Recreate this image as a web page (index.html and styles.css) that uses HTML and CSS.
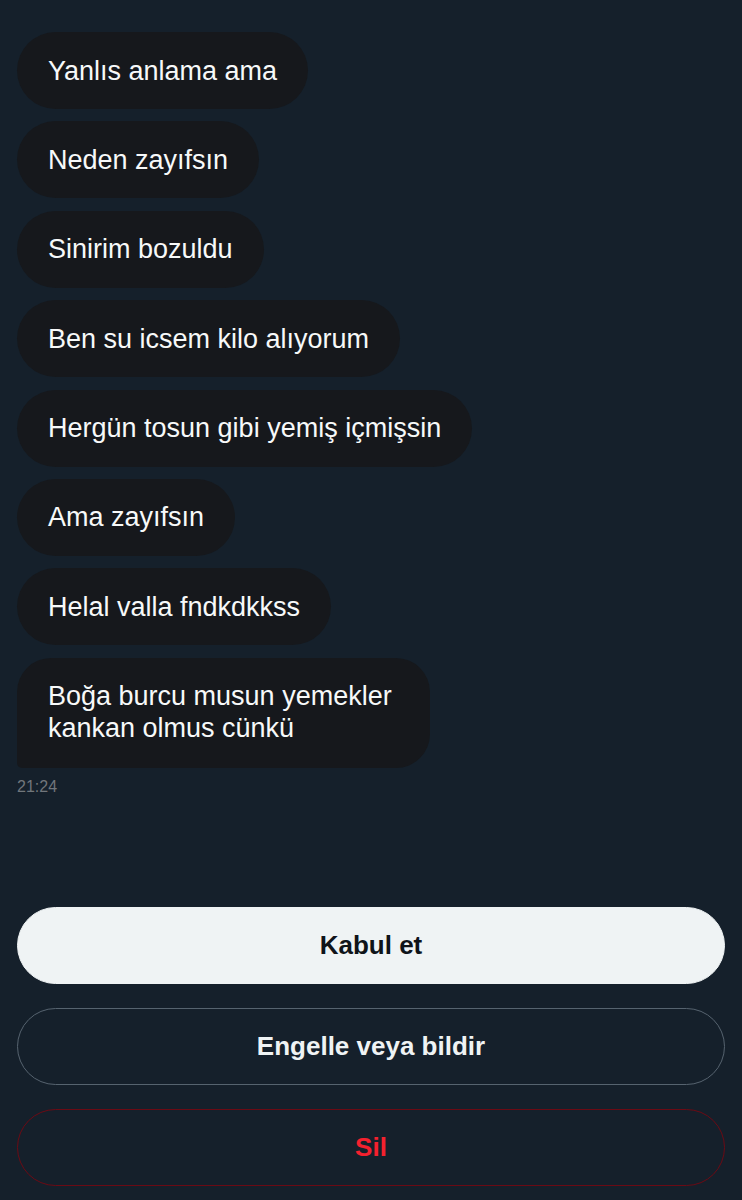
FILE: index.html
```html
<!DOCTYPE html>
<html lang="tr">
<head>
<meta charset="utf-8">
<link rel="stylesheet" href="styles.css">
<title>Mesaj isteği</title>
</head>
<body>
<main class="screen">
  <section class="thread">
    <div class="bubble">Yanlıs anlama ama</div>
    <div class="bubble">Neden zayıfsın</div>
    <div class="bubble">Sinirim bozuldu</div>
    <div class="bubble">Ben su icsem kilo alıyorum</div>
    <div class="bubble">Hergün tosun gibi yemiş içmişsin</div>
    <div class="bubble">Ama zayıfsın</div>
    <div class="bubble">Helal valla fndkdkkss</div>
    <div class="bubble last">Boğa burcu musun yemekler<br>kankan olmus cünkü</div>
    <div class="time">21:24</div>
  </section>
  <section class="actions">
    <button class="btn accept">Kabul et</button>
    <button class="btn block">Engelle veya bildir</button>
    <button class="btn delete">Sil</button>
  </section>
</main>
</body>
</html>
```

FILE: styles.css
```css
html, body {
  margin: 0;
  padding: 0;
  background: #15202b;
}
body {
  font-family: "Liberation Sans", Arial, sans-serif;
  color: #e7e9ea;
}
.screen {
  display: flex;
  flex-direction: column;
  padding: 32px 17px 0 17px;
}
.thread {
  display: flex;
  flex-direction: column;
  align-items: flex-start;
  gap: 12.4px;
}
.bubble {
  background: #16181c;
  color: #f7f9f9;
  font-size: 27px;
  line-height: 32px;
  padding: 22.5px 31px 22.5px 31px;
  border-radius: 40px;
}
.bubble.last {
  border-radius: 34px 34px 34px 5px;
  padding-right: 38px;
  padding-bottom: 24px;
}
.time {
  margin-top: -4px;
  font-size: 16px;
  line-height: 20px;
  color: #71767b;
}
.actions {
  display: flex;
  flex-direction: column;
  gap: 23.5px;
  margin-top: 110px;
}
.btn {
  box-sizing: border-box;
  width: 100%;
  height: 77.5px;
  border-radius: 40px;
  font-family: "Liberation Sans", Arial, sans-serif;
  font-weight: 700;
  font-size: 26px;
  background: transparent;
  border: 1.5px solid #56636f;
  color: #eff3f4;
  padding: 0;
}
.btn.accept {
  background: #eff3f4;
  border-color: #eff3f4;
  color: #0f1419;
}
.btn.delete {
  border-color: #6b0a14;
  color: #f4212e;
}
```
